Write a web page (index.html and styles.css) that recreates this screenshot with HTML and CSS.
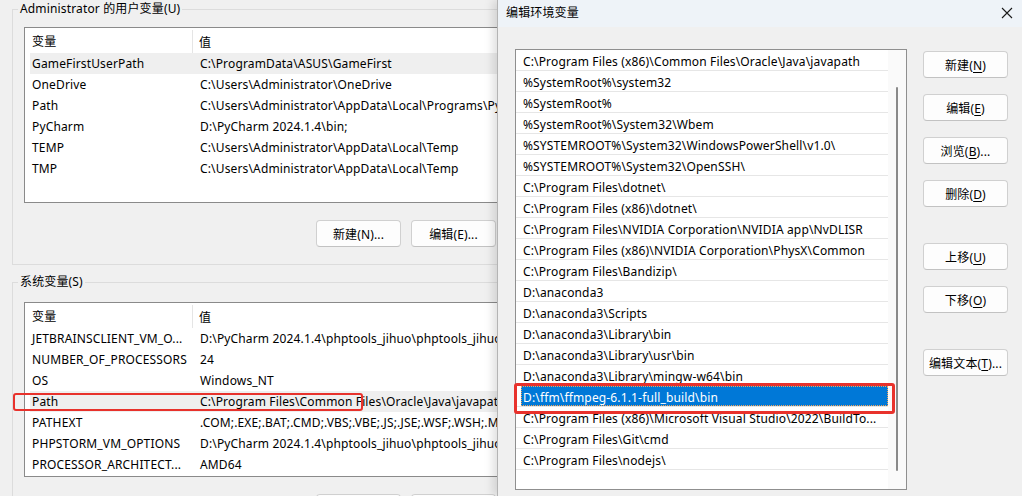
FILE: index.html
```html
<!DOCTYPE html>
<html lang="zh-CN">
<head>
    <meta charset="UTF-8">
    <title>编辑环境变量</title>
    <link rel="stylesheet" href="styles.css">
</head>
<body>
    <div class="desktop">
        <!-- background window: environment variables -->
        <div class="env-window">
            <fieldset class="group user-group">
                <legend>Administrator 的用户变量(U)</legend>
                <div class="listview user-list">
                    <div class="lv-head">
                        <span class="h-name">变量</span>
                        <span class="h-val">值</span>
                    </div>
                    <div class="lv-row soft"><span class="c-name">GameFirstUserPath</span><span class="c-val">C:\ProgramData\ASUS\GameFirst</span></div>
                    <div class="lv-row"><span class="c-name">OneDrive</span><span class="c-val">C:\Users\Administrator\OneDrive</span></div>
                    <div class="lv-row"><span class="c-name">Path</span><span class="c-val">C:\Users\Administrator\AppData\Local\Programs\Python\Python312\Scripts\</span></div>
                    <div class="lv-row"><span class="c-name">PyCharm</span><span class="c-val">D:\PyCharm 2024.1.4\bin;</span></div>
                    <div class="lv-row"><span class="c-name">TEMP</span><span class="c-val">C:\Users\Administrator\AppData\Local\Temp</span></div>
                    <div class="lv-row"><span class="c-name">TMP</span><span class="c-val">C:\Users\Administrator\AppData\Local\Temp</span></div>
                </div>
                <div class="btn-row">
                    <button class="btn">新建(N)...</button>
                    <button class="btn">编辑(E)...</button>
                </div>
            </fieldset>

            <fieldset class="group sys-group">
                <legend>系统变量(S)</legend>
                <div class="listview sys-list">
                    <div class="lv-head">
                        <span class="h-name">变量</span>
                        <span class="h-val">值</span>
                    </div>
                    <div class="lv-row"><span class="c-name">JETBRAINSCLIENT_VM_O...</span><span class="c-val">D:\PyCharm 2024.1.4\phptools_jihuo\phptools_jihuo\vmoptions</span></div>
                    <div class="lv-row"><span class="c-name">NUMBER_OF_PROCESSORS</span><span class="c-val">24</span></div>
                    <div class="lv-row"><span class="c-name">OS</span><span class="c-val">Windows_NT</span></div>
                    <div class="lv-row soft"><span class="c-name">Path</span><span class="c-val">C:\Program Files\Common Files\Oracle\Java\javapath;</span></div>
                    <div class="lv-row"><span class="c-name">PATHEXT</span><span class="c-val">.COM;.EXE;.BAT;.CMD;.VBS;.VBE;.JS;.JSE;.WSF;.WSH;.MSC</span></div>
                    <div class="lv-row"><span class="c-name">PHPSTORM_VM_OPTIONS</span><span class="c-val">D:\PyCharm 2024.1.4\phptools_jihuo\phptools_jihuo\vmoptions</span></div>
                    <div class="lv-row"><span class="c-name">PROCESSOR_ARCHITECT...</span><span class="c-val">AMD64</span></div>
                </div>
                <div class="btn-row">
                    <button class="btn">新建(W)...</button>
                    <button class="btn">编辑(I)...</button>
                </div>
            </fieldset>
        </div>

        <!-- foreground dialog -->
        <div class="dialog">
            <div class="titlebar">
                <span class="title">编辑环境变量</span>
                <svg class="close" width="12" height="12" viewBox="0 0 12 12">
                    <path d="M1 1 L11 11 M11 1 L1 11" stroke="#1a1a1a" stroke-width="1.1" fill="none"/>
                </svg>
            </div>
            <div class="dialog-body">
                <div class="pathlist">
                    <ul class="items">
                        <li><span>C:\Program Files (x86)\Common Files\Oracle\Java\javapath</span></li>
                        <li><span>%SystemRoot%\system32</span></li>
                        <li><span>%SystemRoot%</span></li>
                        <li><span>%SystemRoot%\System32\Wbem</span></li>
                        <li><span>%SYSTEMROOT%\System32\WindowsPowerShell\v1.0\</span></li>
                        <li><span>%SYSTEMROOT%\System32\OpenSSH\</span></li>
                        <li><span>C:\Program Files\dotnet\</span></li>
                        <li><span>C:\Program Files (x86)\dotnet\</span></li>
                        <li><span>C:\Program Files\NVIDIA Corporation\NVIDIA app\NvDLISR</span></li>
                        <li><span>C:\Program Files (x86)\NVIDIA Corporation\PhysX\Common</span></li>
                        <li><span>C:\Program Files\Bandizip\</span></li>
                        <li><span>D:\anaconda3</span></li>
                        <li><span>D:\anaconda3\Scripts</span></li>
                        <li><span>D:\anaconda3\Library\bin</span></li>
                        <li><span>D:\anaconda3\Library\usr\bin</span></li>
                        <li><span>D:\anaconda3\Library\mingw-w64\bin</span></li>
                        <li class="sel"><span>D:\ffm\ffmpeg-6.1.1-full_build\bin</span></li>
                        <li><span>C:\Program Files (x86)\Microsoft Visual Studio\2022\BuildTo...</span></li>
                        <li><span>C:\Program Files\Git\cmd</span></li>
                        <li><span>C:\Program Files\nodejs\</span></li>
                    </ul>
                    <div class="vscroll"><div class="thumb"></div></div>
                </div>
                <div class="side">
                    <button class="btn">新建(<u>N</u>)</button>
                    <button class="btn">编辑(<u>E</u>)</button>
                    <button class="btn">浏览(<u>B</u>)...</button>
                    <button class="btn">删除(<u>D</u>)</button>
                    <button class="btn spaced">上移(<u>U</u>)</button>
                    <button class="btn">下移(<u>O</u>)</button>
                    <button class="btn spaced">编辑文本(<u>T</u>)...</button>
                </div>
            </div>
        </div>

        <!-- red annotation boxes -->
        <div class="mark mark-left"></div>
        <div class="mark mark-right"></div>
    </div>
</body>
</html>
```

FILE: styles.css
```css
/* base */
html, body {
    margin: 0;
    padding: 0;
}
body {
    font-family: "Noto Sans", "Noto Sans CJK SC", sans-serif;
    font-size: 12px;
    letter-spacing: 0.15px;
    color: #000;
    background-color: #f0f0f0;
    overflow: hidden;
}
.desktop {
    position: relative;
    display: flex;
    width: 1022px;
    height: 496px;
    overflow: hidden;
}

/* background window */
.env-window {
    flex: none;
    width: 497px;
    height: 496px;
    padding-left: 12px;
    box-sizing: border-box;
    overflow: hidden;
}
.group {
    width: 620px;
    margin: 0;
    padding: 0 0 17px 0;
    border: 1px solid #dcdcdc;
    min-inline-size: 0;
}
.group legend {
    margin-left: 5px;
    padding: 0 2px;
    line-height: 18px;
    font-size: 12px;
}
.sys-group {
    margin-top: 8px;
}
.listview {
    margin-left: 11px;
    width: 560px;
    background: #fff;
    border: 1px solid #8a8a8a;
    box-sizing: border-box;
    overflow: hidden;
}
.user-list {
    margin-top: 9px;
    height: 176px;
}
.sys-list {
    margin-top: 11px;
    height: 175px;
}
.lv-head {
    display: flex;
    height: 25px;
    align-items: center;
}
.h-name {
    width: 168px;
    padding-left: 7px;
    box-sizing: border-box;
    height: 23px;
    line-height: 23px;
    margin-top: 2px;
    border-right: 1px solid #e5e5e5;
}
.h-val {
    padding-left: 6px;
    margin-top: 2px;
}
.lv-row {
    display: flex;
    height: 21px;
    line-height: 21px;
    margin-left: 5px;
    white-space: nowrap;
}
.lv-row.soft {
    background: #efefef;
}
.c-name {
    flex: none;
    width: 170px;
    padding-left: 2px;
    box-sizing: border-box;
    overflow: hidden;
}
.c-val {
    white-space: nowrap;
}
.btn-row {
    display: flex;
    gap: 10px;
    margin: 17px 0 0 303px;
}

/* buttons */
.btn {
    flex: none;
    width: 85px;
    height: 27px;
    padding: 0;
    font-family: inherit;
    font-size: 12px;
    letter-spacing: 0.15px;
    color: #000;
    background: #fdfdfd;
    border: 1px solid #d0d0d0;
    border-bottom-color: #c2c2c2;
    border-radius: 4px;
}
.btn u {
    text-underline-offset: 2px;
}

/* foreground dialog */
.dialog {
    position: relative;
    z-index: 1;
    flex: none;
    width: 525px;
    height: 496px;
    background: #f0f0f0;
    border-left: 1px solid #b4b4b4;
    box-sizing: border-box;
    box-shadow: -4px 0 9px rgba(0,0,0,0.13);
}
.titlebar {
    display: flex;
    align-items: center;
    justify-content: space-between;
    height: 27px;
    padding: 0 9px 0 8px;
    background: #eef3f8;
}
.title {
    margin-top: -3px;
}
.close {
    margin-top: -2px;
}
.dialog-body {
    display: flex;
    padding: 22px 0 0 17px;
}
.pathlist {
    display: flex;
    width: 392px;
    height: 441px;
    background: #fff;
    border: 1px solid #8f8f8f;
    box-sizing: border-box;
}
.items {
    width: 372px;
    margin: 0;
    padding: 0;
    list-style: none;
}
.items li {
    height: 21px;
    padding-left: 5px;
    border-bottom: 1px solid #e6e6e6;
    box-sizing: border-box;
    white-space: nowrap;
}
.items li span {
    display: block;
    height: 20px;
    line-height: 24px;
    padding-left: 2px;
}
.items li.sel span {
    background: #0078d7;
    color: #fff;
    outline: 1px dotted #f3a45a;
    outline-offset: -1px;
}
.vscroll {
    flex: 1;
    background: #fafafa;
}
.thumb {
    width: 2px;
    height: 384px;
    margin: 37px 0 0 8px;
    background: #8a8a8a;
    border-radius: 1px;
}
.side {
    display: flex;
    flex-direction: column;
    gap: 16px;
    margin-left: 16px;
    padding-top: 2px;
}
.side .spaced {
    margin-top: 20px;
}

/* red annotations */
.mark {
    position: absolute;
    z-index: 2;
    border: 2px solid #e8322c;
    border-radius: 3px;
    box-sizing: border-box;
}
.mark-left {
    left: 13px;
    top: 393px;
    width: 350px;
    height: 18px;
}
.mark-right {
    left: 514px;
    top: 383px;
    width: 381px;
    height: 31px;
    border-width: 3px;
}
```
